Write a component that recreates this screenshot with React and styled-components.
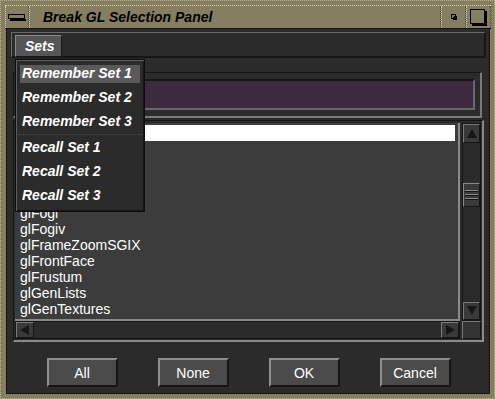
import React from 'react';
import styled, { createGlobalStyle } from 'styled-components';

const GlobalStyle = createGlobalStyle`
  html, body { margin: 0; padding: 0; background: #2b2b2b; }
  body { font-family: "Liberation Sans", Arial, sans-serif; }
`;

const Frame = styled.div`
  position: relative;
  width: 495px;
  height: 399px;
  box-sizing: border-box;
  background: #857e60;
  padding: 5px 4px 4px 5px;
  display: flex;
  flex-direction: column;
  border: 1px dotted #b9b393;
`;

const TitleBar = styled.div`
  height: 22px;
  display: flex;
  background: #857e60;
  border-top: 1px dotted #d6d0b4;
  border-bottom: 1px solid #111;
  margin: -1px -1px 0 -1px;
`;

const TitleButton = styled.div`
  width: ${(p) => p.$w}px;
  display: flex;
  align-items: center;
  justify-content: center;
  border-left: 1px dotted #d6d0b4;
  border-right: 1px dotted #4e4934;
  box-sizing: border-box;
`;

const Title = styled.div`
  flex: 1;
  padding-left: 13px;
  font: italic bold 14px "Liberation Sans", Arial, sans-serif;
  color: #000;
  line-height: 22px;
  border-left: 1px dotted #d6d0b4;
  border-right: 1px dotted #4e4934;
`;

const Content = styled.div`
  flex: 1;
  background: #2b2b2b;
  border: 1px solid #151515;
  border-top: none;
  display: flex;
  flex-direction: column;
  padding: 3px 3px 0 4px;
`;

const MenuBar = styled.div`
  height: 26px;
  box-sizing: border-box;
  border-top: 1px solid #6a6a6a;
  border-left: 1px solid #6a6a6a;
  border-right: 2px solid #151515;
  border-bottom: 2px solid #151515;
  padding: 2px 3px;
  display: flex;
`;

const MenuButton = styled.div`
  width: 47px;
  height: 22px;
  box-sizing: border-box;
  background: #565656;
  border-top: 1px solid #8a8a8a;
  border-left: 1px solid #8a8a8a;
  border-right: 1px solid #1a1a1a;
  border-bottom: 1px solid #1a1a1a;
  color: #fff;
  font: italic bold 14px "Liberation Sans", Arial, sans-serif;
  line-height: 20px;
  padding-left: 9px;
`;

const FieldGroup = styled.div`
  margin: 14px 4px 0 2px;
  height: 46px;
  box-sizing: border-box;
  border-top: 1px solid #151515;
  border-left: 1px solid #151515;
  border-right: 2px solid #7a7a7a;
  border-bottom: 2px solid #7a7a7a;
  padding: 6px 5px 6px 6px;
`;

const TextField = styled.div`
  height: 100%;
  box-sizing: border-box;
  background: #3c2a3e;
  border-top: 2px solid #151515;
  border-left: 2px solid #151515;
  border-right: 2px solid #6e6370;
  border-bottom: 2px solid #6e6370;
`;

const ListFrame = styled.div`
  margin: 2px 2px 0 2px;
  height: 222px;
  box-sizing: border-box;
  border-top: 1px solid #151515;
  border-left: 1px solid #151515;
  border-right: 2px solid #8a8a8a;
  border-bottom: 2px solid #8a8a8a;
  padding: 2px 1px 1px 1px;
  display: grid;
  grid-template-columns: 1fr 19px;
  grid-template-rows: 1fr 18px;
  column-gap: 2px;
`;

const List = styled.div`
  background: #3c3c3c;
  border-right: 2px solid #8a8a8a;
  border-bottom: 2px solid #8a8a8a;
  padding: 2px 3px 0 2px;
  overflow: hidden;
`;

const Row = styled.div`
  height: 16px;
  line-height: 16px;
  padding-left: 3px;
  font: 14px "Liberation Sans", Arial, sans-serif;
  color: ${(p) => (p.$selected ? '#000' : '#fff')};
  background: ${(p) => (p.$selected ? '#fff' : 'transparent')};
  white-space: nowrap;
`;

const VScroll = styled.div`
  background: #2b2b2b;
  border: 1px solid #151515;
  display: flex;
  flex-direction: column;
`;

const HScroll = styled.div`
  background: #2b2b2b;
  border: 1px solid #151515;
  display: flex;
`;

const ArrowButton = styled.div`
  width: ${(p) => p.$w || 17}px;
  height: ${(p) => p.$h || 17}px;
  box-sizing: border-box;
  background: #3a3a3a;
  border-top: 1px solid #7a7a7a;
  border-left: 1px solid #7a7a7a;
  border-right: 1px solid #151515;
  border-bottom: 1px solid #151515;
  display: flex;
  align-items: center;
  justify-content: center;
  flex-shrink: 0;
`;

const Track = styled.div`
  flex: 1;
  background: #2b2b2b;
  display: flex;
  flex-direction: column;
  padding-top: ${(p) => p.$offset || 0}px;
`;

const Thumb = styled.div`
  height: 24px;
  box-sizing: border-box;
  background: #3a3a3a;
  border-top: 1px solid #8a8a8a;
  border-left: 1px solid #8a8a8a;
  border-right: 1px solid #151515;
  border-bottom: 1px solid #151515;
  display: flex;
  flex-direction: column;
  justify-content: center;
  gap: 2px;
  padding: 0 1px;
`;

const Grip = styled.div`
  height: 1px;
  background: #8a8a8a;
  border-bottom: 1px solid #151515;
`;

const Corner = styled(ArrowButton)`
  background: #333;
`;

const ButtonRow = styled.div`
  display: flex;
  justify-content: center;
  gap: 40px;
  margin-top: 16px;
`;

const PushButton = styled.button`
  width: 71px;
  height: 29px;
  box-sizing: border-box;
  background: #4b4b4b;
  color: #fff;
  font: 14px "Liberation Sans", Arial, sans-serif;
  border-top: 2px solid #8e8e8e;
  border-left: 2px solid #8e8e8e;
  border-right: 2px solid #151515;
  border-bottom: 2px solid #151515;
  padding: 0;
`;

const Menu = styled.div`
  position: absolute;
  left: 14px;
  top: 58px;
  width: 130px;
  box-sizing: border-box;
  background: #2b2b2b;
  border: 1px solid #0c0c0c;
  box-shadow: inset 1px 1px 0 #5e5e5e, inset -1px -1px 0 #151515;
  padding: 2px 0 3px;
`;

const MenuItem = styled.div`
  height: 24px;
  padding: 3px 4px;
  box-sizing: border-box;
`;

const MenuLabel = styled.div`
  height: 18px;
  line-height: 18px;
  padding-left: 2px;
  color: #fff;
  font: italic bold 14px "Liberation Sans", Arial, sans-serif;
  background: ${(p) => (p.$active ? '#5a5a5a' : 'transparent')};
  white-space: nowrap;
`;

const Separator = styled.div`
  height: 1px;
  margin: 0 2px;
  border-top: 1px dotted #4a4a4a;
`;

const Triangle = ({ dir }) => {
  const pts = {
    up: '6,1 11,10 1,10',
    down: '1,1 11,1 6,10',
    left: '1,6 10,1 10,11',
    right: '2,1 11,6 2,11',
  }[dir];
  return (
    <svg width="12" height="12" viewBox="0 0 12 12">
      <polygon points={pts} fill="#161616" />
    </svg>
  );
};

const items = [
  'glFeedbackBuffer',
  'glFinish',
  'glFlush',
  'glFogf',
  'glFogfv',
  'glFogi',
  'glFogiv',
  'glFrameZoomSGIX',
  'glFrontFace',
  'glFrustum',
  'glGenLists',
  'glGenTextures',
];

const menu = [
  ['Remember Set 1', 'Remember Set 2', 'Remember Set 3'],
  ['Recall Set 1', 'Recall Set 2', 'Recall Set 3'],
];

export default function App() {
  return (
    <>
      <GlobalStyle />
      <Frame>
        <TitleBar>
          <TitleButton $w={24}>
            <svg width="18" height="7" viewBox="0 0 18 7">
              <rect x="0.5" y="0.5" width="16" height="4" fill="#857e60" stroke="#000" />
              <rect x="2" y="5" width="16" height="2" fill="#000" />
            </svg>
          </TitleButton>
          <Title>Break GL Selection Panel</Title>
          <TitleButton $w={25}>
            <svg width="6" height="6" viewBox="0 0 6 6">
              <rect x="0.5" y="0.5" width="4" height="4" fill="none" stroke="#000" />
              <rect x="2" y="2" width="4" height="4" fill="#000" />
              <rect x="1" y="1" width="2" height="2" fill="#857e60" />
            </svg>
          </TitleButton>
          <TitleButton $w={25}>
            <svg width="17" height="17" viewBox="0 0 17 17">
              <rect x="2" y="2" width="15" height="15" fill="#000" />
              <rect x="0.5" y="0.5" width="14" height="14" fill="#857e60" stroke="#000" />
            </svg>
          </TitleButton>
        </TitleBar>
        <Content>
          <MenuBar>
            <MenuButton>Sets</MenuButton>
          </MenuBar>
          <FieldGroup>
            <TextField />
          </FieldGroup>
          <ListFrame>
            <List>
              {items.map((name, i) => (
                <Row key={name} $selected={i === 0}>
                  {name}
                </Row>
              ))}
            </List>
            <VScroll>
              <ArrowButton $h={19}>
                <Triangle dir="up" />
              </ArrowButton>
              <Track $offset={40}>
                <Thumb>
                  <Grip />
                  <Grip />
                  <Grip />
                </Thumb>
              </Track>
              <ArrowButton $h={18}>
                <Triangle dir="down" />
              </ArrowButton>
            </VScroll>
            <HScroll>
              <ArrowButton $w={18} $h={16}>
                <Triangle dir="left" />
              </ArrowButton>
              <Track />
              <ArrowButton $w={18} $h={16}>
                <Triangle dir="right" />
              </ArrowButton>
            </HScroll>
            <Corner $w={19} $h={18} />
          </ListFrame>
          <ButtonRow>
            <PushButton>All</PushButton>
            <PushButton>None</PushButton>
            <PushButton>OK</PushButton>
            <PushButton>Cancel</PushButton>
          </ButtonRow>
        </Content>
        <Menu>
          {menu.map((group, g) => (
            <React.Fragment key={g}>
              {g > 0 && <Separator />}
              {group.map((label, i) => (
                <MenuItem key={label}>
                  <MenuLabel $active={g === 0 && i === 0}>{label}</MenuLabel>
                </MenuItem>
              ))}
            </React.Fragment>
          ))}
        </Menu>
      </Frame>
    </>
  );
}
